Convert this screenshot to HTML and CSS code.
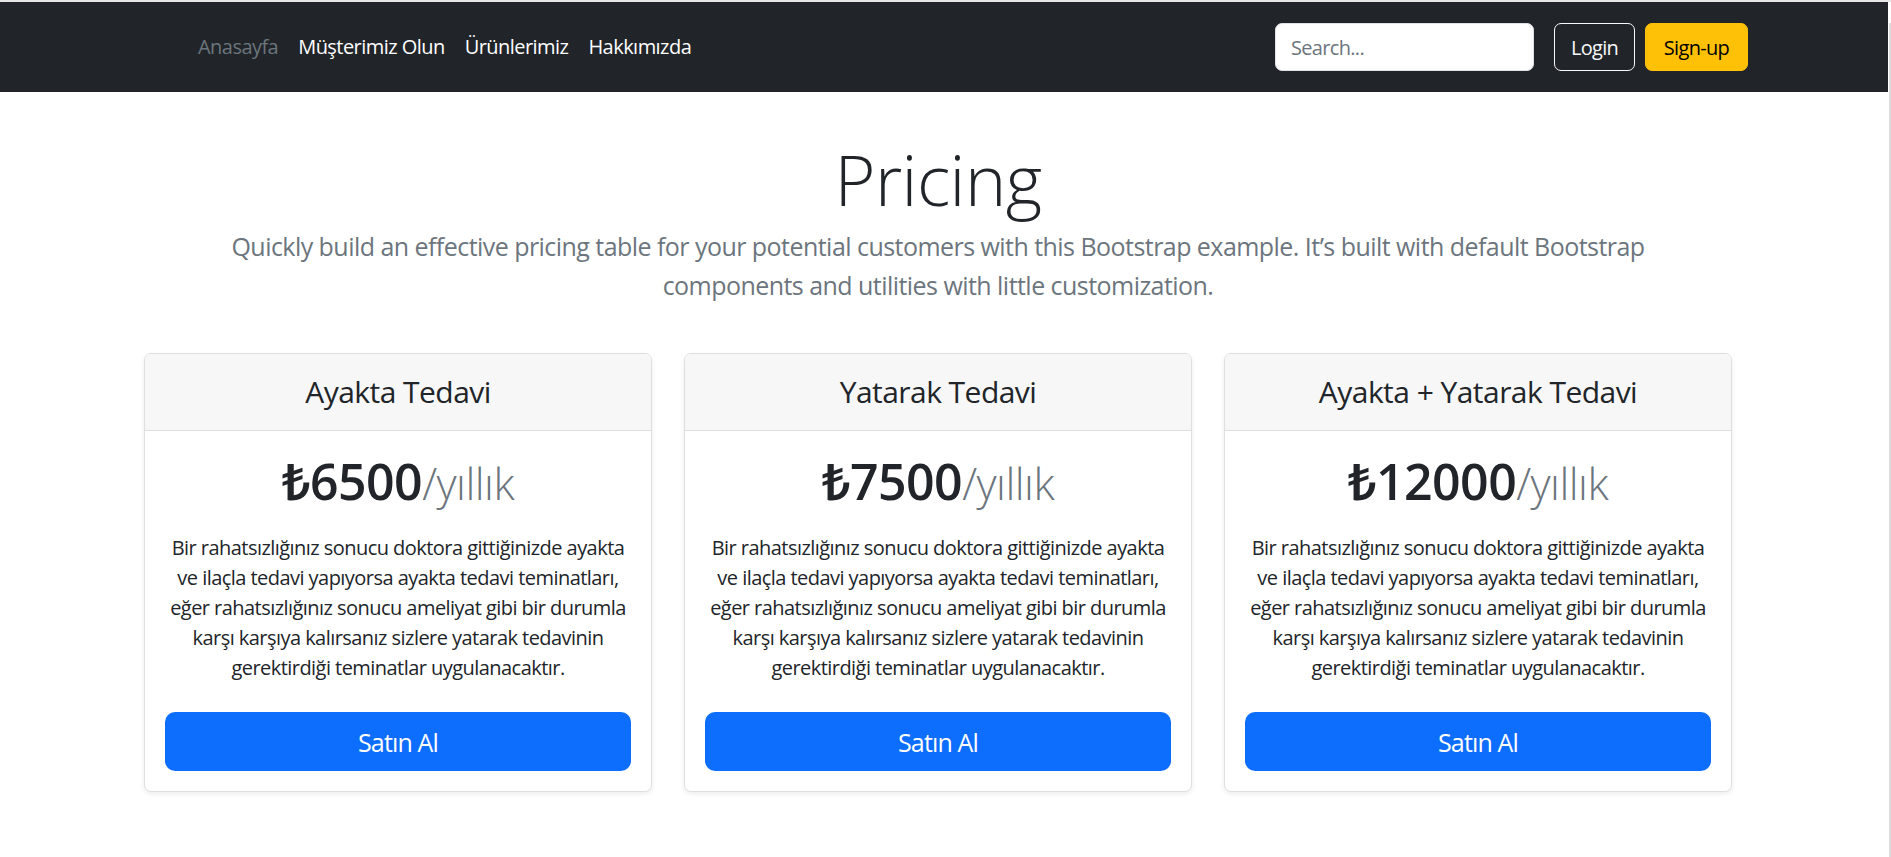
FILE: index.html
```html
<!DOCTYPE html>
<html lang="tr">
<head>
<meta charset="utf-8">
<title>Pricing</title>
<link rel="stylesheet" href="styles.css">
</head>
<body>
<div class="frame">
  <div class="page">
    <header class="navbar">
      <div class="nav-inner">
        <span class="logo"></span>
        <ul class="nav-links">
          <li><a class="nav-link muted" href="#">Anasayfa</a></li>
          <li><a class="nav-link" href="#">Müşterimiz Olun</a></li>
          <li><a class="nav-link" href="#">Ürünlerimiz</a></li>
          <li><a class="nav-link" href="#">Hakkımızda</a></li>
        </ul>
        <form class="nav-search"><input class="search-input" type="search" placeholder="Search..."></form>
        <div class="nav-btns">
          <button class="btn btn-login" type="button">Login</button>
          <button class="btn btn-signup" type="button">Sign-up</button>
        </div>
      </div>
    </header>
    <main class="main">
      <div class="pricing-header">
        <h1 class="pricing-title">Pricing</h1>
        <p class="pricing-lead">Quickly build an effective pricing table for your potential customers with this Bootstrap example. It’s built with default Bootstrap<br>components and utilities with little customization.</p>
      </div>
      <div class="cards">
        <div class="card">
          <div class="card-header"><h4 class="card-name">Ayakta Tedavi</h4></div>
          <div class="card-body">
            <h1 class="price">₺6500<small class="per">/yıllık</small></h1>
            <p class="desc">Bir rahatsızlığınız sonucu doktora gittiğinizde ayakta<br>ve ilaçla tedavi yapıyorsa ayakta tedavi teminatları,<br>eğer rahatsızlığınız sonucu ameliyat gibi bir durumla<br>karşı karşıya kalırsanız sizlere yatarak tedavinin<br>gerektirdiği teminatlar uygulanacaktır.</p>
            <button class="buy" type="button">Satın Al</button>
          </div>
        </div>
        <div class="card">
          <div class="card-header"><h4 class="card-name">Yatarak Tedavi</h4></div>
          <div class="card-body">
            <h1 class="price">₺7500<small class="per">/yıllık</small></h1>
            <p class="desc">Bir rahatsızlığınız sonucu doktora gittiğinizde ayakta<br>ve ilaçla tedavi yapıyorsa ayakta tedavi teminatları,<br>eğer rahatsızlığınız sonucu ameliyat gibi bir durumla<br>karşı karşıya kalırsanız sizlere yatarak tedavinin<br>gerektirdiği teminatlar uygulanacaktır.</p>
            <button class="buy" type="button">Satın Al</button>
          </div>
        </div>
        <div class="card">
          <div class="card-header"><h4 class="card-name">Ayakta + Yatarak Tedavi</h4></div>
          <div class="card-body">
            <h1 class="price">₺12000<small class="per">/yıllık</small></h1>
            <p class="desc">Bir rahatsızlığınız sonucu doktora gittiğinizde ayakta<br>ve ilaçla tedavi yapıyorsa ayakta tedavi teminatları,<br>eğer rahatsızlığınız sonucu ameliyat gibi bir durumla<br>karşı karşıya kalırsanız sizlere yatarak tedavinin<br>gerektirdiği teminatlar uygulanacaktır.</p>
            <button class="buy" type="button">Satın Al</button>
          </div>
        </div>
      </div>
    </main>
  </div>
  <div class="scroll-strip"><div class="scroll-bar"></div></div>
</div>
</body>
</html>
```

FILE: styles.css
```css
* { box-sizing: border-box; }

html, body {
  margin: 0;
  padding: 0;
  background: #fff;
}

body {
  font-family: "Open Sans", "Noto Sans", "DejaVu Sans", sans-serif;
  color: #212529;
  letter-spacing: -0.034em;
}

.frame {
  display: flex;
  height: 100vh;
  border-top: 2px solid #e6e6e6;
}

.page {
  flex: 1;
  min-width: 0;
}

.scroll-strip {
  width: 3px;
  padding-top: 21px;
  padding-left: 1px;
  background: #fff;
}

.scroll-bar {
  width: 2px;
  height: 100%;
  background: #dcdcdc;
}

/* navbar */
.navbar {
  background: #212529;
  padding: 21px 12px 21px 0;
}

.nav-inner {
  width: 1620px;
  margin: 0 auto;
  display: flex;
  align-items: center;
}

.logo {
  width: 60px;
  height: 40px;
  flex: none;
}

.nav-links {
  display: flex;
  list-style: none;
  margin: 0 auto 0 0;
  padding: 0;
}

.nav-link {
  display: block;
  padding: 9px 10px;
  font-size: 20px;
  line-height: 30px;
  color: #fff;
  text-decoration: none;
}

.nav-link.muted {
  color: #6c757d;
}

.nav-search {
  margin: 0 20px 0 0;
}

.search-input {
  display: block;
  width: 259px;
  height: 48px;
  padding: 7px 15px;
  font-family: inherit;
  font-size: 20px;
  letter-spacing: -0.034em;
  color: #212529;
  background: #fff;
  border: 1px solid #dee2e6;
  border-radius: 7px;
  outline: none;
}

.search-input::placeholder {
  color: #6c757d;
}

.nav-btns {
  display: flex;
}

.btn {
  height: 48px;
  padding: 0;
  font-family: inherit;
  font-size: 20px;
  letter-spacing: -0.034em;
  border-radius: 7px;
  cursor: pointer;
}

.btn-login {
  width: 81px;
  margin-right: 10px;
  color: #f8f9fa;
  background: transparent;
  border: 1px solid #f8f9fa;
}

.btn-signup {
  width: 103px;
  color: #000;
  background: #ffc107;
  border: 1px solid #ffc107;
}

/* main */
.main {
  width: calc(100% - 12px);
}

.pricing-header {
  text-align: center;
  padding-top: 45px;
}

.pricing-title {
  margin: 0 0 6px;
  font-size: 70px;
  line-height: 84px;
  font-weight: 350;
  color: #212529;
}

.pricing-lead {
  margin: 0;
  font-size: 25px;
  line-height: 39px;
  color: #6c757d;
  white-space: nowrap;
}

.cards {
  display: flex;
  justify-content: center;
  gap: 32px;
  margin-top: 48px;
}

.card {
  width: 508px;
  background: #fff;
  border: 1px solid #dfdfdf;
  border-radius: 7px;
  box-shadow: 0 2px 5px rgba(0, 0, 0, 0.075);
  text-align: center;
  overflow: hidden;
}

.card-header {
  background: #f7f7f7;
  border-bottom: 1px solid #dfdfdf;
  padding: 20px;
}

.card-name {
  margin: 0;
  font-size: 30px;
  line-height: 36px;
  font-weight: 400;
}

.card-body {
  padding: 20px;
}

.price {
  margin: 0 0 20px;
  font-size: 50px;
  line-height: 60px;
  font-weight: 600;
  color: #212529;
}

.per {
  font-size: 0.875em;
  font-weight: 300;
  color: #6c757d;
}

.desc {
  margin: 0 0 29px;
  font-size: 20px;
  line-height: 30px;
  color: #212529;
  white-space: nowrap;
}

.buy {
  display: block;
  width: 100%;
  height: 59px;
  padding: 0;
  font-family: inherit;
  font-size: 25px;
  letter-spacing: -0.034em;
  color: #fff;
  background: #0d6efd;
  border: none;
  border-radius: 10px;
  cursor: pointer;
}
```
